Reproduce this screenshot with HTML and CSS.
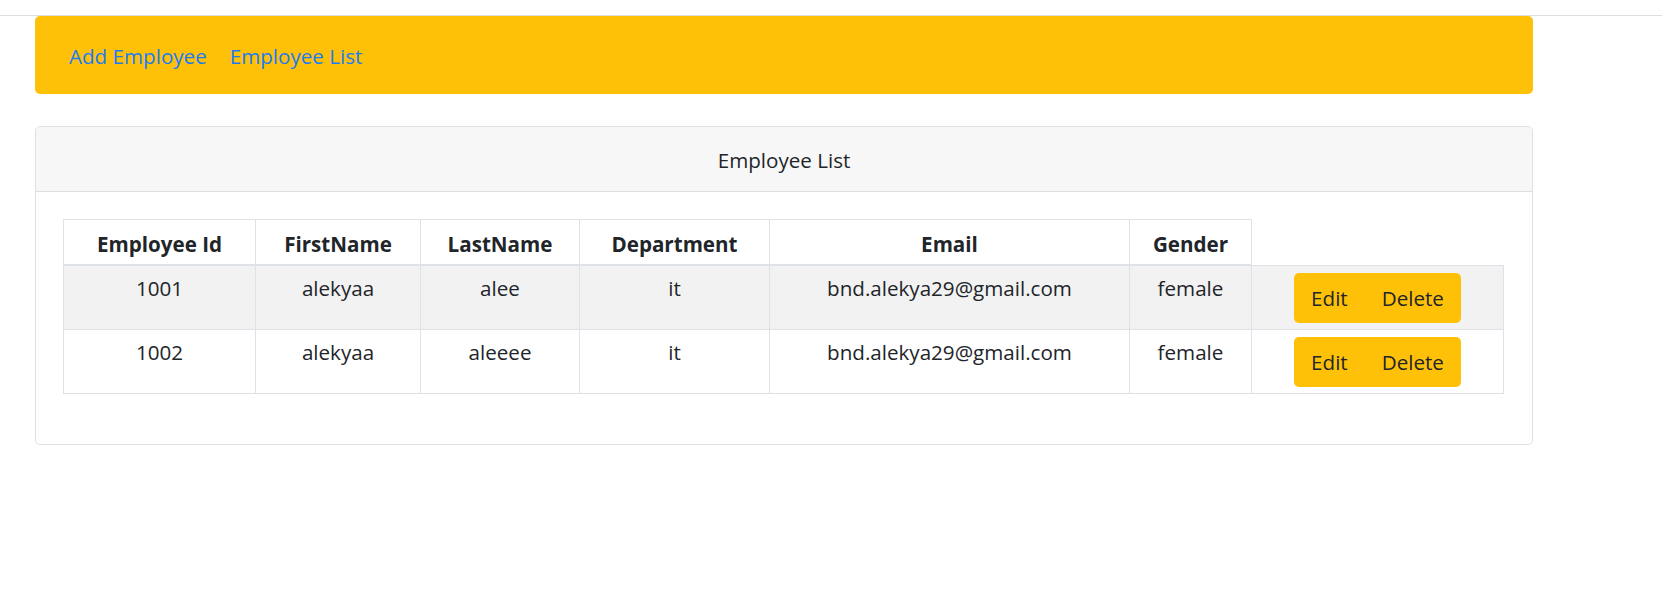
FILE: index.html
```html
<!DOCTYPE html>
<html lang="en">
<head>
<meta charset="utf-8">
<title>Employee List</title>
<link rel="stylesheet" href="styles.css">
</head>
<body>
<div class="topline"></div>
<div class="container">
  <nav class="navbar">
    <a class="nav-link" href="#">Add Employee</a>
    <a class="nav-link" href="#">Employee List</a>
  </nav>
  <div class="card">
    <div class="card-header">Employee List</div>
    <div class="card-body">
      <table class="table">
        <colgroup>
          <col class="c-id">
          <col class="c-first">
          <col class="c-last">
          <col class="c-dept">
          <col class="c-email">
          <col class="c-gender">
          <col class="c-actions">
        </colgroup>
        <thead>
          <tr>
            <th>Employee Id</th>
            <th>FirstName</th>
            <th>LastName</th>
            <th>Department</th>
            <th>Email</th>
            <th>Gender</th>
          </tr>
        </thead>
        <tbody>
          <tr class="striped">
            <td>1001</td>
            <td>alekyaa</td>
            <td>alee</td>
            <td>it</td>
            <td>bnd.alekya29@gmail.com</td>
            <td>female</td>
            <td class="actions"><div class="btn-group"><button class="btn">Edit</button><button class="btn">Delete</button></div></td>
          </tr>
          <tr>
            <td>1002</td>
            <td>alekyaa</td>
            <td>aleeee</td>
            <td>it</td>
            <td>bnd.alekya29@gmail.com</td>
            <td>female</td>
            <td class="actions"><div class="btn-group"><button class="btn">Edit</button><button class="btn">Delete</button></div></td>
          </tr>
        </tbody>
      </table>
    </div>
  </div>
</div>
</body>
</html>
```

FILE: styles.css
```css
* { box-sizing: border-box; }

body {
  margin: 0;
  background: #fff;
  color: #212529;
  font-family: "Open Sans", "Noto Sans", sans-serif;
  font-size: 20.6px;
  line-height: 30px;
}

.topline {
  height: 16px;
  border-bottom: 1px solid #dedede;
}

.container {
  margin-left: 35px;
  width: 1498px;
}

.navbar {
  display: flex;
  align-items: flex-start;
  gap: 23px;
  height: 78px;
  padding: 25px 34px 0;
  background: #ffc107;
  border-radius: 5px;
}

.nav-link {
  color: #1a7bf5;
  text-decoration: none;
  line-height: 30px;
}

.card {
  margin-top: 32px;
  border: 1px solid #dfdfdf;
  border-radius: 5px;
  overflow: hidden;
}

.card-header {
  background: #f7f7f7;
  border-bottom: 1px solid #dfdfdf;
  text-align: center;
  padding: 18px 20px 16px;
}

.card-body {
  padding: 27px 29px 50px 27px;
}

.table {
  width: 1440px;
  table-layout: fixed;
  border-collapse: collapse;
}

.c-id { width: 192px; }
.c-first { width: 165px; }
.c-last { width: 159px; }
.c-dept { width: 190px; }
.c-email { width: 360px; }
.c-gender { width: 122px; }
.c-actions { width: 252px; }

.table th,
.table td {
  border: 1px solid #dee2e6;
  text-align: center;
  vertical-align: top;
  padding: 7px 6px 6px;
}

.table th {
  font-weight: 700;
  padding: 9px 6px 5px;
  border-bottom: 2px solid #dee2e6;
}

.table tr.striped td {
  background: #f2f2f2;
}

.table td {
  height: 64px;
}

.table td.actions {
  padding: 7px 6px 6px;
}

.btn-group {
  display: inline-flex;
  border-radius: 5px;
  overflow: hidden;
}

.btn {
  font-family: inherit;
  font-size: 20.6px;
  line-height: 30px;
  color: #212529;
  background: #ffc107;
  border: 0;
  padding: 10px 17px;
  margin: 0;
  cursor: pointer;
}
```
